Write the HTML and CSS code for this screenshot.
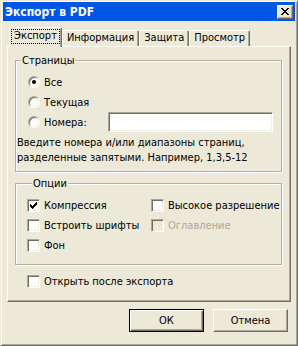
FILE: index.html
```html
<!DOCTYPE html>
<html lang="ru">
<head>
  <meta charset="UTF-8">
  <title>Экспорт в PDF</title>
  <link rel="stylesheet" href="styles.css">
</head>
<body>
  <div class="window">
    <div class="titlebar">
      <span class="title">Экспорт в PDF</span>
      <span class="close">
        <svg width="8" height="7" viewBox="0 0 8 7" shape-rendering="crispEdges">
          <path d="M0 0h2v1h-2zM6 0h2v1h-2zM1 1h2v1h-2zM5 1h2v1h-2zM2 2h4v1h-4zM3 3h2v1h-2zM2 4h4v1h-4zM1 5h2v1h-2zM5 5h2v1h-2zM0 6h2v1h-2zM6 6h2v1h-2z" fill="#000"/>
        </svg>
      </span>
    </div>

    <div class="tabs">
      <div class="tab active"><span class="focus">Экспорт</span></div>
      <div class="tab">Информация</div>
      <div class="tab">Защита</div>
      <div class="tab">Просмотр</div>
    </div>

    <div class="panel">
      <fieldset class="group pages">
        <legend>Страницы</legend>
        <div class="row"><span class="radio checked"></span>Все</div>
        <div class="row"><span class="radio"></span>Текущая</div>
        <div class="row"><span class="radio"></span>Номера:<span class="field"></span></div>
        <p class="hint">Введите номера и/или диапазоны страниц,<br>разделенные запятыми. Например, 1,3,5-12</p>
      </fieldset>

      <fieldset class="group options">
        <legend>Опции</legend>
        <div class="grid">
          <div class="row"><span class="check checked"><svg width="7" height="7" viewBox="0 0 7 7" shape-rendering="crispEdges"><path d="M6 0h1v3h-1zM5 1h1v3h-1zM4 2h1v3h-1zM0 2h1v3h-1zM1 3h1v3h-1zM3 3h1v3h-1zM2 4h1v3h-1z" fill="#000"/></svg></span>Компрессия</div>
          <div class="row"><span class="check"></span>Высокое разрешение</div>
          <div class="row"><span class="check"></span>Встроить шрифты</div>
          <div class="row disabled"><span class="check"></span>Оглавление</div>
          <div class="row"><span class="check"></span>Фон</div>
        </div>
      </fieldset>

      <div class="row open"><span class="check"></span>Открыть после экспорта</div>
    </div>

    <div class="buttons">
      <button class="btn default">ОК</button>
      <button class="btn">Отмена</button>
    </div>
  </div>
</body>
</html>
```

FILE: styles.css
```css
body {
  margin: 0;
  font-family: "DejaVu Sans Condensed", "DejaVu Sans", sans-serif;
  font-size: 11px;
  color: #000;
  background: #ECE9D8;
}
.window {
  width: 298px;
  height: 346px;
  box-sizing: border-box;
  background: #ECE9D8;
  border: 1px solid;
  border-color: #ECE9D8 #716F64 #716F64 #ECE9D8;
  box-shadow: inset 1px 1px #fff, inset -1px -1px #ACA899;
  padding: 1px 2px 2px;
}
.titlebar {
  height: 19px;
  background: #0055E5;
  color: #fff;
  font-weight: bold;
  font-size: 12px;
  display: flex;
  align-items: center;
  justify-content: space-between;
  padding: 0 2px 0 2px;
}
.close {
  width: 16px;
  height: 14px;
  box-sizing: border-box;
  background: #ECE9D8;
  border: 1px solid;
  border-color: #fff #716F64 #716F64 #fff;
  box-shadow: inset -1px -1px #ACA899;
  display: flex;
  align-items: center;
  justify-content: center;
}
.tabs {
  display: flex;
  align-items: flex-end;
  height: 19px;
  margin: 6px 4px 0;
  padding-left: 2px;
  position: relative;
  z-index: 1;
}
.tab {
  height: 16px;
  box-sizing: border-box;
  padding: 0 4px;
  line-height: 14px;
  border: 1px solid;
  border-bottom: none;
  border-color: #fff #716F64 transparent #fff;
  box-shadow: inset -1px 0 #ACA899;
  border-radius: 2px 2px 0 0;
  background: #ECE9D8;
}
.tab.active {
  height: 20px;
  margin-bottom: -1px;
  padding: 1px 1px 0;
}
.focus {
  display: block;
  height: 15px;
  line-height: 14px;
  padding: 0 3px;
  box-sizing: border-box;
  outline: 1px dotted #000;
  outline-offset: -1px;
}
.panel {
  height: 256px;
  margin: 0 4px;
  box-sizing: border-box;
  border: 1px solid;
  border-color: #fff #716F64 #716F64 #fff;
  box-shadow: inset -1px -1px #ACA899;
  padding: 7px 8px 0 7px;
}
.group {
  margin: 0;
  padding: 0;
  border: 1px solid #B5B29C;
  box-shadow: 1px 1px #fff, inset 1px 1px #fff;
}
.group legend {
  margin-left: 5px;
  padding: 0 1px;
  line-height: 13px;
  background: #ECE9D8;
}
.pages {
  padding: 5px 8px 6px 0;
}
.pages .row {
  padding-left: 12px;
}
.options {
  margin-top: 5px;
  padding: 5px 0 9px 11px;
}
.row {
  display: flex;
  align-items: center;
  height: 20px;
}
.grid {
  display: grid;
  grid-template-columns: 124px 1fr;
}
.radio {
  width: 12px;
  height: 12px;
  box-sizing: border-box;
  border-radius: 50%;
  background: #fff;
  border: 1px solid;
  border-color: #ACA899 #fff #fff #ACA899;
  box-shadow: inset 1px 1px #716F64, inset -1px -1px #F1EFE2;
  margin-right: 4px;
  display: flex;
  align-items: center;
  justify-content: center;
}
.radio.checked::after {
  content: "";
  width: 4px;
  height: 4px;
  border-radius: 50%;
  background: #000;
}
.check {
  width: 13px;
  height: 13px;
  box-sizing: border-box;
  background: #fff;
  border: 1px solid;
  border-color: #ACA899 #fff #fff #ACA899;
  box-shadow: inset 1px 1px #716F64, inset -1px -1px #F1EFE2;
  margin-right: 4px;
  display: flex;
  align-items: center;
  justify-content: center;
}
.disabled {
  color: #ACA899;
}
.disabled .check {
  background: #ECE9D8;
}
.field {
  width: 165px;
  height: 20px;
  box-sizing: border-box;
  margin-left: auto;
  background: #fff;
  border: 1px solid;
  border-color: #ACA899 #fff #fff #ACA899;
  box-shadow: inset 1px 1px #716F64, inset -1px -1px #F1EFE2;
}
.hint {
  margin: 3px 0 0 1px;
  line-height: 15px;
}
.open {
  margin: 6px 0 0 12px;
}
.buttons {
  display: flex;
  justify-content: flex-end;
  gap: 9px;
  margin-top: 7px;
  padding-right: 7px;
}
.btn {
  width: 75px;
  height: 23px;
  padding: 0;
  font: inherit;
  color: #000;
  background: #ECE9D8;
  border: 1px solid;
  border-color: #fff #716F64 #716F64 #fff;
  box-shadow: inset -1px -1px #ACA899;
}
.btn.default {
  border-color: #000;
  box-shadow: inset 1px 1px #fff, inset -1px -1px #716F64, inset -2px -2px #ACA899;
}
```
